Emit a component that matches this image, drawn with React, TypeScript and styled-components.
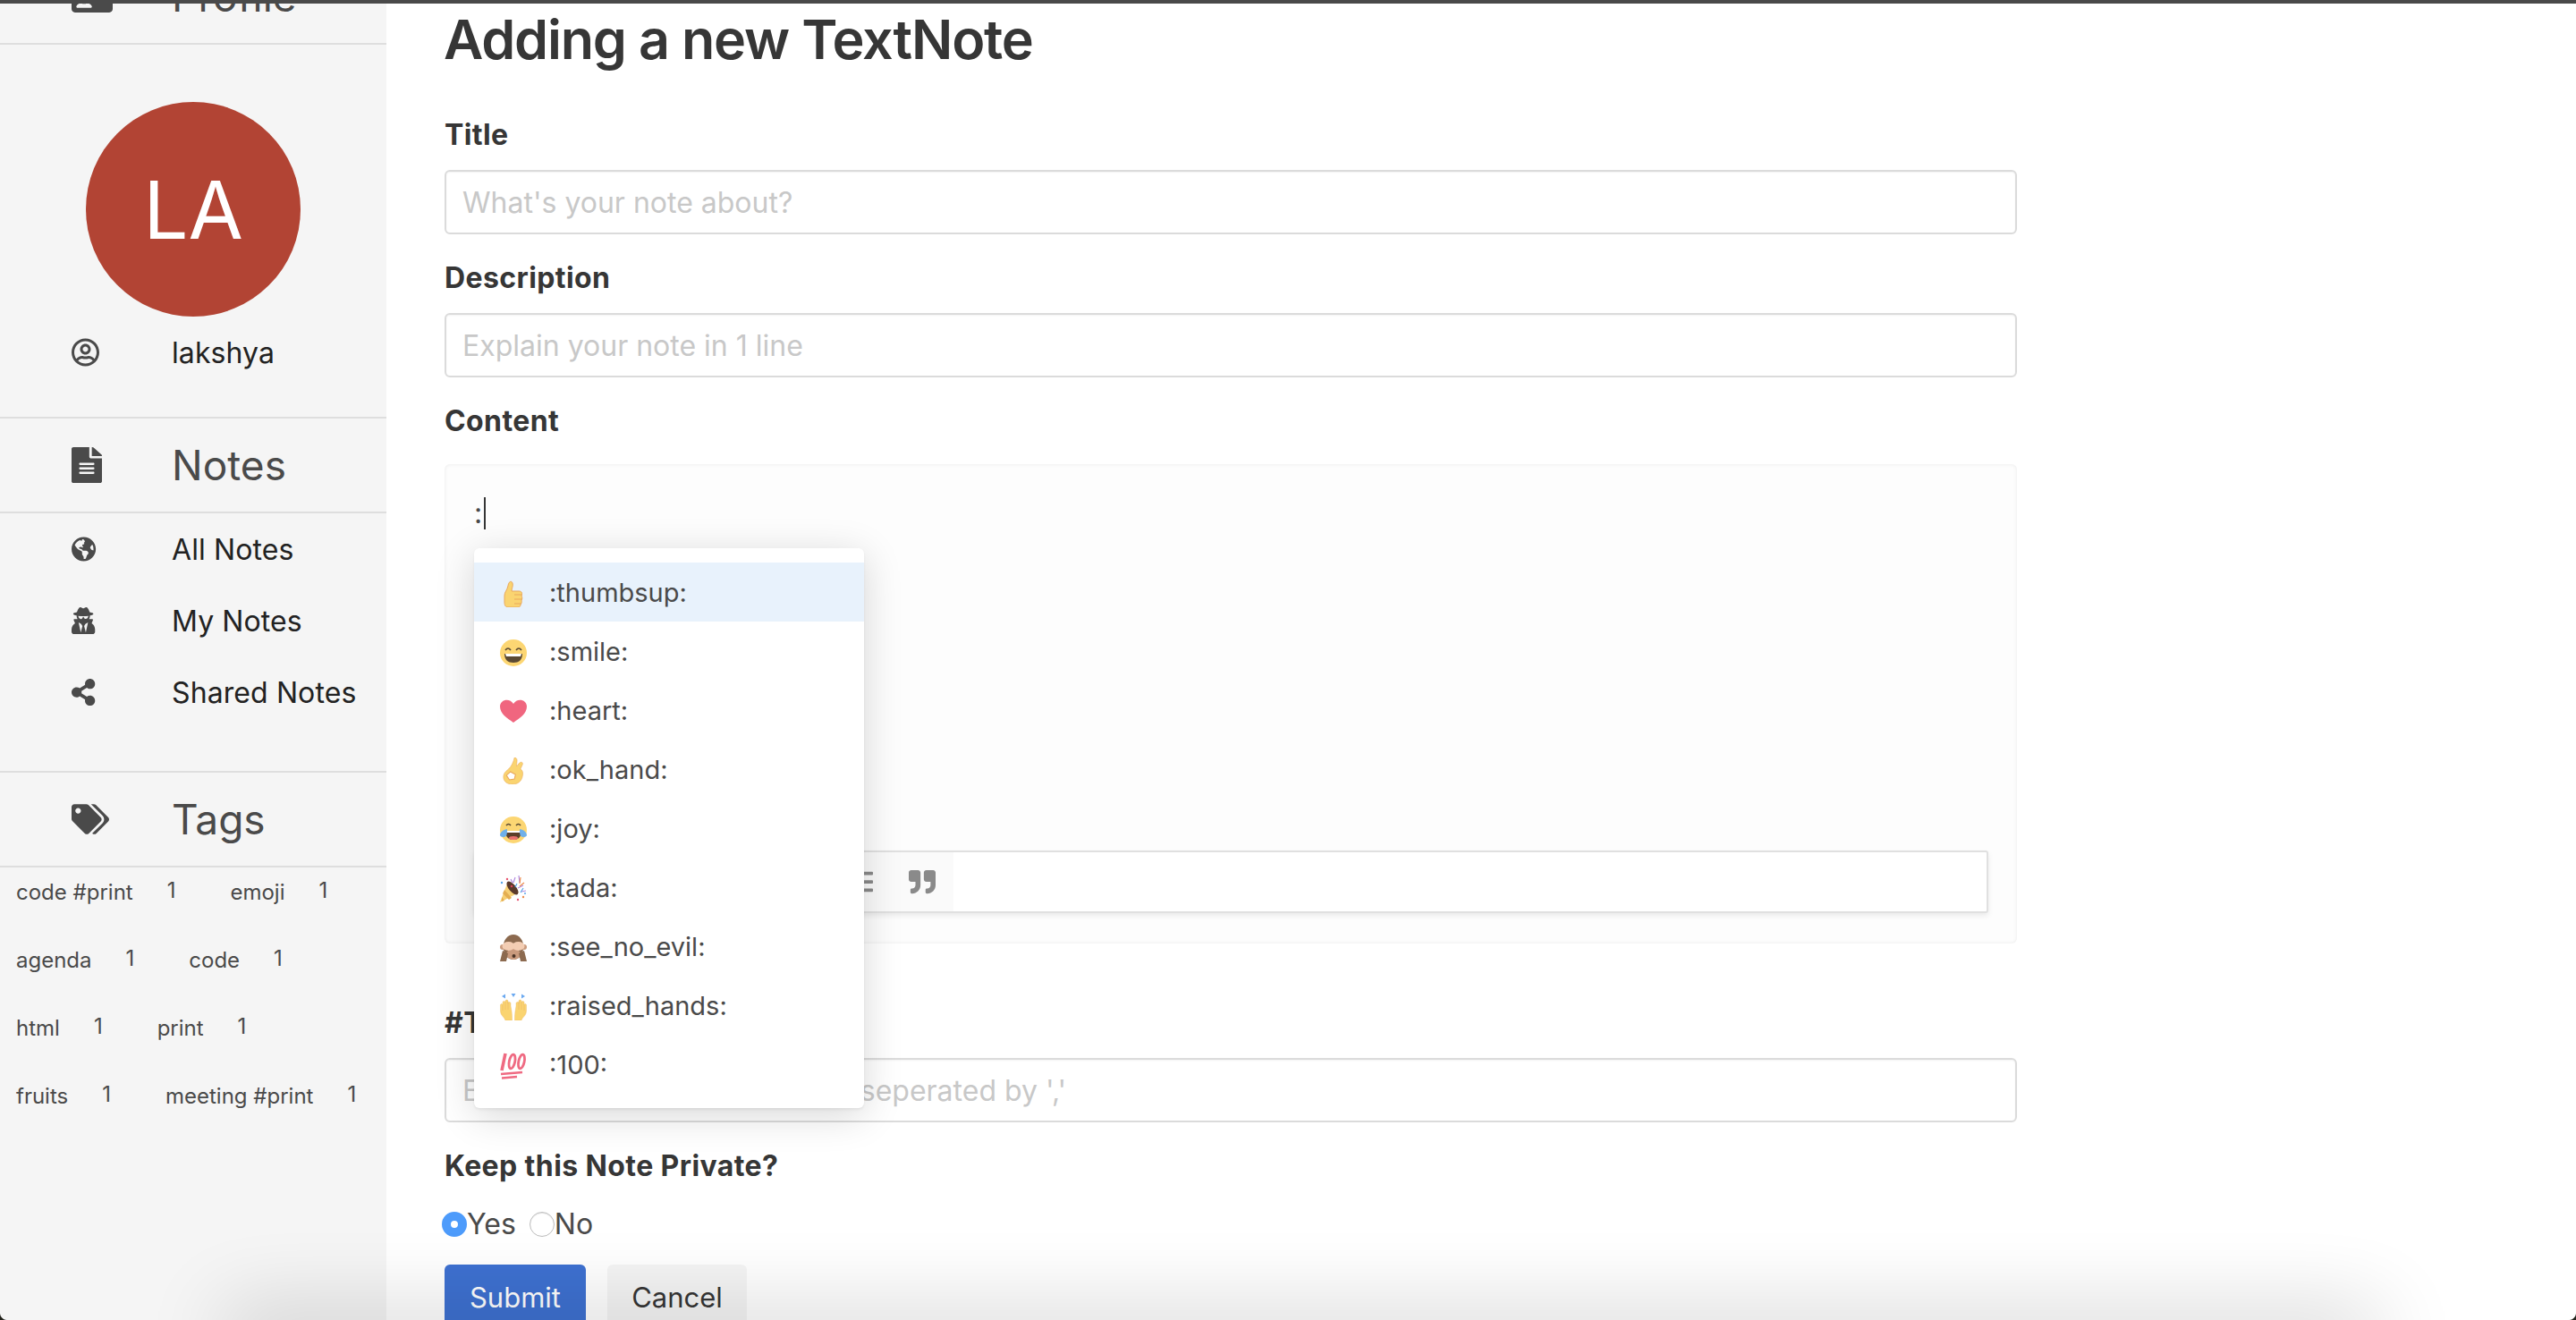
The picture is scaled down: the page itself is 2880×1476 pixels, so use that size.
import styled, { createGlobalStyle } from 'styled-components';
import {
  FaBold,
  FaCode,
  FaFileAlt,
  FaGlobeAmericas,
  FaIdCard,
  FaItalic,
  FaListOl,
  FaListUl,
  FaQuoteRight,
  FaRegUserCircle,
  FaShareAlt,
  FaTags,
  FaUnderline,
  FaUserSecret,
} from 'react-icons/fa';

const GlobalStyle = createGlobalStyle`
  html, body {
    margin: 0;
    height: 100%;
    background: #fff;
    overflow: hidden;
  }
  body {
    font-family: Inter, "Liberation Sans", sans-serif;
    color: #4a4a4a;
  }
`;

const Page = styled.div`
  position: relative;
  display: flex;
  height: 1476px;
  overflow: hidden;
`;
const TopEdge = styled.div`
  position: absolute;
  top: 0;
  left: 0;
  right: 0;
  height: 4px;
  background: #4a4a4a;
  z-index: 5;
`;
const BottomShade = styled.div`
  position: absolute;
  top: 100%;
  left: 260px;
  right: 230px;
  height: 30px;
  box-shadow: 0 0 90px 10px rgba(0, 0, 0, 0.2);
  z-index: 4;
`;
const Corner = styled.div<{ $side: 'left' | 'right' }>`
  position: absolute;
  bottom: 0;
  ${(props) => props.$side}: 0;
  width: 8px;
  height: 8px;
  z-index: 5;
  background: radial-gradient(
    circle at ${(props) => (props.$side === 'left' ? '100% 0' : '0 0')},
    transparent 7.5px,
    #23231c 8.5px
  );
`;

const Sidebar = styled.aside`
  flex: 0 0 432px;
  background: #f5f5f5;
`;
const SideHeader = styled.div<{ $first?: boolean }>`
  display: flex;
  align-items: center;
  height: 104px;
  margin-top: ${(props) => (props.$first ? '-56px' : '0')};
  padding-left: 80px;
  border-bottom: 2px solid #dedede;
  font-size: 46px;
  color: #4a4a4a;
`;
const HeaderIcon = styled.span`
  flex: 0 0 112px;
  display: flex;
  align-items: center;
`;
const NoteFileIcon = styled(FaFileAlt)`
  width: 34px;
  height: 40px;
`;
const ProfileBlock = styled.div`
  padding: 64px 0 32px;
  border-bottom: 2px solid #dedede;
`;
const Avatar = styled.div`
  display: flex;
  align-items: center;
  justify-content: center;
  width: 240px;
  height: 240px;
  margin: 0 auto;
  border-radius: 50%;
  background: #b24434;
  color: #fff;
  font-size: 89px;
  font-weight: 400;
`;
const SideRow = styled.div`
  display: flex;
  align-items: center;
  height: 80px;
  padding-left: 80px;
  font-size: 32px;
  letter-spacing: 0.1px;
  color: #222;
`;
const RowIcon = styled.span`
  flex: 0 0 112px;
  display: flex;
  align-items: center;
  color: #4a4a4a;
`;
const NotesList = styled.div`
  padding-bottom: 48px;
  border-bottom: 2px solid #dedede;
`;
const TagList = styled.div`
  display: flex;
  flex-wrap: wrap;
`;
const Tag = styled.div`
  display: flex;
  align-items: center;
  height: 54px;
  margin-bottom: 22px;
  padding: 0 43px 0 18px;
  font-size: 24px;
  color: #4a4a4a;

  &:last-child {
    padding-right: 0;
  }
`;
const TagCount = styled.span`
  margin-left: 38px;
  margin-top: -4px;
`;

const Main = styled.main`
  position: relative;
  flex: 1;
  padding: 4px 0 0 65px;
`;
const Form = styled.form`
  display: flex;
  flex-direction: column;
  width: 1758px;
`;
const Heading = styled.h1`
  margin: 0 0 47px -1px;
  font-size: 61px;
  line-height: 80px;
  font-weight: 600;
  letter-spacing: -1.2px;
  color: #363636;
`;
const Label = styled.label`
  display: block;
  height: 40px;
  margin-bottom: 19px;
  font-size: 32px;
  line-height: 40px;
  font-weight: 700;
  letter-spacing: 0.4px;
  color: #363636;
`;
const Input = styled.input`
  box-sizing: border-box;
  display: block;
  width: 100%;
  height: 72px;
  margin-bottom: 29px;
  padding: 0 18px;
  border: 2px solid #dbdbdb;
  border-radius: 6px;
  box-shadow: inset 0 1px 2px rgba(10, 10, 10, 0.05);
  font: 400 32px Inter, sans-serif;
  outline: none;

  &::placeholder {
    color: #c8c8c8;
    opacity: 1;
  }
`;

const Editor = styled.div`
  position: relative;
  box-sizing: border-box;
  display: flex;
  flex-direction: column;
  height: 536px;
  margin: 9px 0 69px;
  padding: 36px 32px 34px 33px;
  background: #fdfdfd;
  border-radius: 6px;
  box-shadow: inset 0 0 4px rgba(0, 0, 0, 0.08);
  font-size: 32px;
`;
const EditorText = styled.div`
  display: flex;
  align-items: center;
  height: 38px;
  line-height: 38px;
`;
const Caret = styled.span`
  width: 2px;
  height: 36px;
  margin-left: 2px;
  background: #363636;
`;
const Toolbar = styled.div`
  box-sizing: border-box;
  display: flex;
  height: 70px;
  margin-top: auto;
  background: #fff;
  border: 2px solid #e0e0e0;
  border-width: 2px 2px 2px 0;
  border-radius: 3px;
  box-shadow: 0 3px 6px rgba(0, 0, 0, 0.08);
`;
const ToolbarGroup = styled.div`
  display: flex;
  justify-content: flex-end;
  width: 536px;
  background: #fafafa;
`;
const ToolButton = styled.span`
  flex: 0 0 70px;
  display: flex;
  align-items: center;
  justify-content: center;
  font-size: 30px;
  color: #8a8a8a;
`;

const EmojiMenu = styled.ul`
  position: absolute;
  top: 94px;
  left: 33px;
  z-index: 2;
  width: 436px;
  margin: 0;
  padding: 16px 0;
  list-style: none;
  background: #fff;
  border-radius: 6px;
  box-shadow: 0 2px 3px rgba(0, 0, 0, 0.06), 0 8px 44px rgba(0, 0, 0, 0.16);
`;
const EmojiRow = styled.li<{ $active?: boolean }>`
  display: flex;
  align-items: center;
  gap: 25px;
  height: 66px;
  padding-left: 29px;
  background: ${(props) => (props.$active ? '#e8f2fc' : 'transparent')};
  font-size: 29px;
  color: #4a4a4a;
`;
const EmojiSvg = styled.svg`
  flex: 0 0 30px;
  width: 30px;
  height: 30px;
  margin-top: 4px;
`;

const RadioRow = styled.div`
  display: flex;
  align-items: center;
  height: 50px;
  margin: 0 0 21px -3px;
  font-size: 32px;
  color: #4a4a4a;
`;
const RadioOption = styled.label`
  display: flex;
  align-items: center;
  margin-right: 15px;
`;
const Radio = styled.input`
  appearance: none;
  box-sizing: border-box;
  width: 28px;
  height: 28px;
  margin: 2px 0 0;
  border-radius: 50%;
  border: 1px solid #bdbdbd;
  background: #fff;
  box-shadow: inset 0 1px 1px rgba(0, 0, 0, 0.1);

  &:checked {
    border: 10px solid #4d9bfb;
    box-shadow: none;
  }
`;
const Buttons = styled.div`
  display: flex;
  gap: 24px;
`;
const Button = styled.button<{ $primary?: boolean }>`
  width: ${(props) => (props.$primary ? '158px' : '156px')};
  height: 72px;
  padding: 0;
  border: none;
  border-radius: 6px;
  background: ${(props) => (props.$primary ? '#3e71d1' : '#f5f5f5')};
  color: ${(props) => (props.$primary ? '#fff' : '#363636')};
  font: 400 31px Inter, sans-serif;
`;

const emojis: Record<string, React.ReactNode> = {
  thumbsup: (
    <>
      <path
        d="M10 30c-4 0-5-2-5-6v-7c0-4 3-6 4-11 .5-5 4-6 5-3s-1 6-1 9h8c4 0 4 3 3 5 1 2 1 4 0 5 .5 2 0 4-1 5 0 2-1 3-3 3z"
        fill="#fad470"
        stroke="#e9a85c"
      />
      <path d="M16 16h9M16 21h9M16 26h8" stroke="#e9a85c" fill="none" />
    </>
  ),
  smile: (
    <>
      <circle cx="15" cy="15" r="15" fill="#fcd673" />
      <path d="M6 12q3-4 6 0M18 12q3-4 6 0" fill="none" stroke="#5b4a33" strokeWidth="1.6" />
      <path d="M5 16h20c0 7-4 10-10 10S5 23 5 16z" fill="#5b4a33" />
      <path d="M6 16h18l-1 3H7z" fill="#fff" />
    </>
  ),
  heart: (
    <path
      d="M15 27C8 22 0 17 0 9c0-8 11-10 15-3 4-7 15-5 15 3 0 8-8 13-15 18z"
      fill="#f0667f"
    />
  ),
  ok_hand: (
    <g transform="translate(0.5 0) scale(1.12 1)">
      <path
        d="M14 0c2 0 3 2 2.5 5l-.5 5 3-4c2-2 4 0 3 2l-2 5c2 1 3 4 2 8-1 6-5 9-10 9s-9-3-9-8c0-5 3-7 5-9 3-3 5-8 6-13z"
        fill="#fad470"
        stroke="#e9a85c"
        strokeWidth="0.5"
      />
      <path d="M6 20l4-4 5 3-1 5-5 1z" fill="#fff" stroke="#e9a85c" />
    </g>
  ),
  joy: (
    <>
      <circle cx="15" cy="15" r="15" fill="#fcd673" />
      <path d="M7 10q2.5-3 5 0M18 10q2.5-3 5 0" fill="none" stroke="#5b4a33" strokeWidth="1.6" />
      <path d="M6 16h18c0 7-4 10-9 10S6 23 6 16z" fill="#5b3f2a" />
      <path d="M6 16h18v2H6z" fill="#fff" />
      <ellipse cx="15" cy="24" rx="5" ry="2" fill="#e8716f" />
      <path
        d="M0 21c0-3 3-6 8-7 0 5 0 9-4 9-2 0-4-1-4-2zM30 21c0-3-3-6-8-7 0 5 0 9 4 9 2 0 4-1 4-2z"
        fill="#6fb0ea"
      />
    </>
  ),
  tada: (
    <>
      <path d="M0 30l8-21 13 10z" fill="#f6cf74" />
      <path d="M5 16l8 9-3 2-7-7zM2 24l3 4-3 1z" fill="#e4ae52" />
      <ellipse cx="14" cy="14" rx="4" ry="9" transform="rotate(-40 14 14)" fill="#5b3a2b" />
      <circle cx="13" cy="12" r="1.3" fill="#d9435a" />
      <path d="M17 2l-2 6M21 0l1 8M12 4l2 4M26 11l-6 3M29 17l-5 1" stroke="#b38ce0" strokeWidth="1.2" fill="none" />
      <path d="M23 2l-1 7M27 8l-5 4" stroke="#ee8d4d" strokeWidth="1.2" fill="none" />
      <path d="M19 9l-2 4M26 14l-3 5" stroke="#5aa6e8" strokeWidth="1.2" fill="none" />
      <circle cx="2" cy="8" r="1.2" fill="#5aa6e8" />
      <circle cx="8" cy="4" r="1.2" fill="#e8556f" />
      <circle cx="26" cy="24" r="1.2" fill="#ee8d4d" />
      <circle cx="20" cy="27" r="1.2" fill="#e8556f" />
      <circle cx="28" cy="20" r="1" fill="#5aa6e8" />
    </>
  ),
  see_no_evil: (
    <>
      <path d="M4 15C3 6 9 0 15 0s12 6 11 15c0 8-5 13-11 13S4 23 4 15z" fill="#8c6a4f" />
      <circle cx="3" cy="14" r="3" fill="#c99a7d" />
      <circle cx="27" cy="14" r="3" fill="#c99a7d" />
      <ellipse cx="15" cy="22" rx="8" ry="6" fill="#c99a7d" />
      <ellipse cx="15.5" cy="24" rx="2" ry="2" fill="#4a3326" />
      <ellipse cx="9.5" cy="13" rx="7" ry="5" fill="#f3cdb3" />
      <ellipse cx="20.5" cy="13" rx="7" ry="5" fill="#f3cdb3" />
      <path d="M0 30l3-12 6 3-2 9zM30 30l-3-12-6 3 2 9z" fill="#8c6a4f" />
    </>
  ),
  raised_hands: (
    <>
      <path d="M12.5 0h5L15 4zM6 .5v5L2 3zM24 .5v5l4-2.500z" fill="#6ba9f0" />
      <path
        d="M.5 19v-6c0-2 2.500-2 2.500 0v-3c0-2 3-2 3 0V8.500c0-2 3-2 3 0V11c0-2 3-2 3 0v3l1 6c.5 4 .5 6 .5 10H6c-1-4-5.500-5-5.500-11z"
        fill="#fad470"
        stroke="#ecb768"
        strokeWidth="0.4"
      />
      <path
        d="M29.500 19v-6c0-2-2.500-2-2.500 0v-3c0-2-3-2-3 0V8.500c0-2-3-2-3 0V11c0-2-3-2-3 0v3l-1 6c-.5 4-.5 6-.5 10H24c1-4 5.500-5 5.500-11z"
        fill="#fad470"
        stroke="#ecb768"
        strokeWidth="0.4"
      />
      <path d="M3 13v6M6 10v8M9 9v9M27 13v6M24 10v8M21 9v9" stroke="#ecb768" strokeWidth="0.7" fill="none" />
    </>
  ),
  '100': (
    <g fill="none" stroke="#ef6a82">
      <path d="M6 1L2 20" strokeWidth="3.6" />
      <ellipse cx="13.5" cy="10" rx="3.2" ry="8" transform="rotate(12 13.5 10)" strokeWidth="2.8" />
      <ellipse cx="24" cy="10" rx="3.2" ry="8" transform="rotate(12 24 10)" strokeWidth="2.8" />
      <path d="M1 24l24-2M2 28.500l17-1.500" strokeWidth="2.6" />
    </g>
  ),
};

const emojiNames = ['thumbsup', 'smile', 'heart', 'ok_hand', 'joy', 'tada', 'see_no_evil', 'raised_hands', '100'];
const tags = ['code #print', 'emoji', 'agenda', 'code', 'html', 'print', 'fruits', 'meeting #print'];
const toolIcons = [FaBold, FaItalic, FaUnderline, FaCode, FaListOl, FaListUl, FaQuoteRight];
// keeps the glyph against the left of its square, where the text column is measured from
const leftAligned = 'xMinYMid meet';

const App = () => (
  <Page>
    <GlobalStyle />
    <TopEdge />
    <Sidebar>
      <SideHeader $first>
        <HeaderIcon>
          <FaIdCard size={46} preserveAspectRatio={leftAligned} />
        </HeaderIcon>
        Profile
      </SideHeader>
      <ProfileBlock>
        <Avatar>LA</Avatar>
        <SideRow>
          <RowIcon>
            <FaRegUserCircle size={32} preserveAspectRatio={leftAligned} />
          </RowIcon>
          lakshya
        </SideRow>
      </ProfileBlock>
      <SideHeader>
        <HeaderIcon>
          <NoteFileIcon preserveAspectRatio="none" />
        </HeaderIcon>
        Notes
      </SideHeader>
      <NotesList>
        <SideRow>
          <RowIcon>
            <FaGlobeAmericas size={28} preserveAspectRatio={leftAligned} />
          </RowIcon>
          All Notes
        </SideRow>
        <SideRow>
          <RowIcon>
            <FaUserSecret size={30} preserveAspectRatio={leftAligned} />
          </RowIcon>
          My Notes
        </SideRow>
        <SideRow>
          <RowIcon>
            <FaShareAlt size={30} preserveAspectRatio={leftAligned} />
          </RowIcon>
          Shared Notes
        </SideRow>
      </NotesList>
      <SideHeader>
        <HeaderIcon>
          <FaTags size={42} preserveAspectRatio={leftAligned} />
        </HeaderIcon>
        Tags
      </SideHeader>
      <TagList>
        {tags.map((tag) => (
          <Tag key={tag}>
            {tag}
            <TagCount>1</TagCount>
          </Tag>
        ))}
      </TagList>
    </Sidebar>
    <Main>
      <Form>
        <Heading>Adding a new TextNote</Heading>
        <Label>Title</Label>
        <Input placeholder="What's your note about?" />
        <Label>Description</Label>
        <Input placeholder="Explain your note in 1 line" />
        <Label>Content</Label>
        <Editor>
          <EditorText>
            :<Caret />
          </EditorText>
          <EmojiMenu>
            {emojiNames.map((name, i) => (
              <EmojiRow key={name} $active={i === 0}>
                <EmojiSvg viewBox="0 0 30 30">{emojis[name]}</EmojiSvg>:{name}:
              </EmojiRow>
            ))}
          </EmojiMenu>
          <Toolbar>
            <ToolbarGroup>
              {toolIcons.map((Icon, i) => (
                <ToolButton key={i}>
                  <Icon />
                </ToolButton>
              ))}
            </ToolbarGroup>
          </Toolbar>
        </Editor>
        <Label>#Tags</Label>
        <Input placeholder="Enter tags for your TextNote, seperated by ','" />
        <Label>Keep this Note Private?</Label>
        <RadioRow>
          <RadioOption>
            <Radio type="radio" name="private" defaultChecked />
            Yes
          </RadioOption>
          <RadioOption>
            <Radio type="radio" name="private" />
            No
          </RadioOption>
        </RadioRow>
        <Buttons>
          <Button $primary type="button">
            Submit
          </Button>
          <Button type="button">Cancel</Button>
        </Buttons>
      </Form>
    </Main>
    <BottomShade />
    <Corner $side="left" />
    <Corner $side="right" />
  </Page>
);

export default App;
